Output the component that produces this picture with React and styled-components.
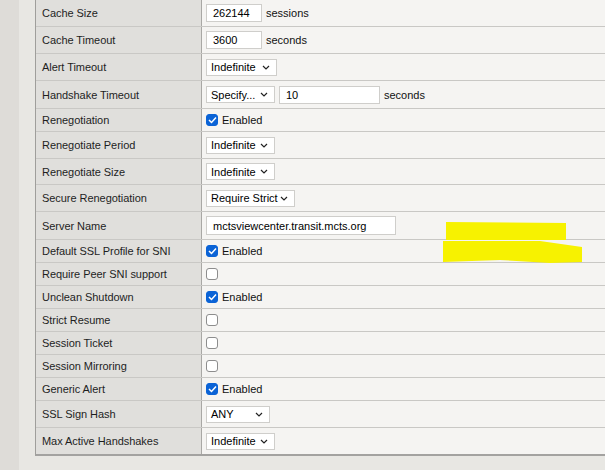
import React from "react";
import styled, { createGlobalStyle } from "styled-components";

const GlobalStyle = createGlobalStyle`
  html, body {
    margin: 0;
    padding: 0;
    background: #e8e7e3;
    font-family: "Liberation Sans", Arial, sans-serif;
    overflow: hidden;
  }
`;

const Page = styled.div`
  display: flex;
  width: 605px;
  height: 470px;
  overflow: hidden;
  position: relative;
`;

const Gutter = styled.div`
  width: 19px;
  flex: none;
  background: #dedcd8;
`;

const Content = styled.div`
  flex: 1;
  padding-left: 16px;
  background: #e8e7e3;
`;

const Table = styled.div`
  width: 600px;
  border-left: 1px solid #9f9e9b;
  border-bottom: 2px solid #a3a2a0;
`;

const Row = styled.div`
  display: grid;
  grid-template-columns: 166px 1fr;
  box-sizing: border-box;
  height: ${(p) => p.$h}px;
  border-bottom: 1px solid #c9c8c5;
  &:last-child {
    border-bottom: none;
    height: ${(p) => p.$h - 1}px;
  }
`;

const Label = styled.div`
  background: #e0dfdc;
  border-right: 1px solid #a9a8a5;
  padding-left: 6px;
  display: flex;
  align-items: center;
  font-size: 11px;
  letter-spacing: -0.05px;
  color: #1e1e1e;
  white-space: nowrap;
`;

const Value = styled.div`
  background: #f5f4f2;
  padding-left: 4px;
  display: flex;
  align-items: center;
  gap: 4px;
  font-size: 11px;
  color: #111;
  white-space: nowrap;
`;

const TextBox = styled.div`
  width: ${(p) => p.$w}px;
  height: ${(p) => p.$ht || 18}px;
  box-sizing: border-box;
  background: #fff;
  border: 1px solid #cfcecb;
  padding-left: 6px;
  display: flex;
  align-items: center;
  font-size: 11px;
  color: #000;
`;

const SelectBox = styled.div`
  width: ${(p) => p.$w}px;
  height: 17px;
  box-sizing: border-box;
  background: #fff;
  border: 1px solid #cfcecb;
  padding: 0 6px 0 4px;
  display: flex;
  align-items: center;
  justify-content: space-between;
  font-size: 11px;
  color: #000;
  white-space: nowrap;
`;

const Box = styled.span`
  width: 12px;
  height: 12px;
  box-sizing: border-box;
  border-radius: 3px;
  display: inline-flex;
  align-items: center;
  justify-content: center;
  background: ${(p) => (p.$on ? "#0b63d6" : "#fff")};
  border: 1px solid ${(p) => (p.$on ? "#0b63d6" : "#8d8d8d")};
`;

const Marks = styled.svg`
  position: absolute;
  left: 440px;
  top: 220px;
`;

const Chevron = () => (
  <svg width="8" height="5" viewBox="0 0 8 5">
    <path d="M1 1 L4 4 L7 1" fill="none" stroke="#222" strokeWidth="1.2" />
  </svg>
);

const Select = ({ w, children }) => (
  <SelectBox $w={w}>
    <span>{children}</span>
    <Chevron />
  </SelectBox>
);

const Check = ({ on }) => (
  <Box $on={on}>
    {on && (
      <svg width="9" height="8" viewBox="0 0 9 8">
        <path d="M1 4 L3.5 6.5 L8 1.5" fill="none" stroke="#fff" strokeWidth="1.5" />
      </svg>
    )}
  </Box>
);

const rows = [
  { label: "Cache Size", h: 27, v: <><TextBox $w={56}>262144</TextBox><span>sessions</span></> },
  { label: "Cache Timeout", h: 27, v: <><TextBox $w={56}>3600</TextBox><span>seconds</span></> },
  { label: "Alert Timeout", h: 27, v: <Select w={71}>Indefinite</Select> },
  {
    label: "Handshake Timeout",
    h: 28,
    v: (
      <>
        <Select w={69}>Specify...</Select>
        <TextBox $w={101}>10</TextBox>
        <span>seconds</span>
      </>
    ),
  },
  { label: "Renegotiation", h: 23, v: <><Check on /><span>Enabled</span></> },
  { label: "Renegotiate Period", h: 27, v: <Select w={69}>Indefinite</Select> },
  { label: "Renegotiate Size", h: 26, v: <Select w={69}>Indefinite</Select> },
  { label: "Secure Renegotiation", h: 27, v: <Select w={89}>Require Strict</Select> },
  { label: "Server Name", h: 28, v: <TextBox $w={190} $ht={19}>mctsviewcenter.transit.mcts.org</TextBox> },
  { label: "Default SSL Profile for SNI", h: 23, v: <><Check on /><span>Enabled</span></> },
  { label: "Require Peer SNI support", h: 23, v: <Check /> },
  { label: "Unclean Shutdown", h: 23, v: <><Check on /><span>Enabled</span></> },
  { label: "Strict Resume", h: 23, v: <Check /> },
  { label: "Session Ticket", h: 23, v: <Check /> },
  { label: "Session Mirroring", h: 23, v: <Check /> },
  { label: "Generic Alert", h: 23, v: <><Check on /><span>Enabled</span></> },
  { label: "SSL Sign Hash", h: 27, v: <Select w={64}>ANY</Select> },
  { label: "Max Active Handshakes", h: 27, v: <Select w={69}>Indefinite</Select> },
];

export default function App() {
  return (
    <>
      <GlobalStyle />
      <Page>
        <Gutter />
        <Content>
          <Table>
            {rows.map((r) => (
              <Row key={r.label} $h={r.h}>
                <Label>{r.label}</Label>
                <Value>{r.v}</Value>
              </Row>
            ))}
          </Table>
        </Content>
        <Marks width="150" height="46" viewBox="0 0 150 46">
          <path d="M6 2 L126 3 L126 20 L6 20 Z" fill="#f7f200" />
          <path d="M3 21 L100 21 L142 27 L142 42 L110 43 L60 40 L3 42 Z" fill="#f7f200" />
        </Marks>
      </Page>
    </>
  );
}
